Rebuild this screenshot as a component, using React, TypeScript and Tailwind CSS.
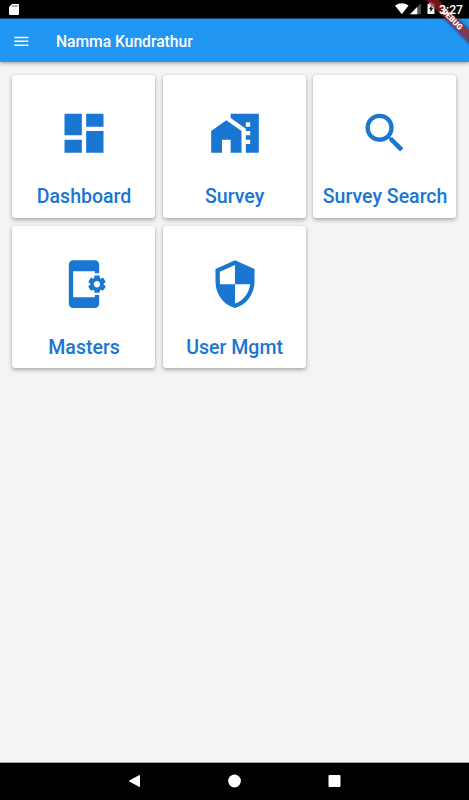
import type { IconType } from 'react-icons';
import { MdAppSettingsAlt, MdDashboard, MdHomeWork, MdMenu, MdSearch, MdSecurity } from 'react-icons/md';

interface MenuItem {
  label: string;
  icon: IconType;
}

const MENU: MenuItem[] = [
  { label: 'Dashboard', icon: MdDashboard },
  { label: 'Survey', icon: MdHomeWork },
  { label: 'Survey Search', icon: MdSearch },
  { label: 'Masters', icon: MdAppSettingsAlt },
  { label: 'User Mgmt', icon: MdSecurity },
];

export default function App() {
  return (
    <div className="relative flex h-[800px] w-[469px] flex-col overflow-hidden bg-[#f4f4f4] font-[Roboto,sans-serif]">
      <StatusBar />
      <header className="z-10 flex h-[43px] shrink-0 items-center bg-[#2196f3] pl-[12.4px] text-white shadow-[0_1px_4px_rgba(0,0,0,0.4)]">
        <MdMenu className="mt-px size-[18.7px]" />
        <h1 className="ml-[24.9px] mt-[2px] text-[15.64px] font-medium leading-5">Namma Kundrathur</h1>
      </header>
      <main className="grid flex-1 grid-cols-[repeat(3,143px)] content-start gap-x-[7.5px] gap-y-[8.3px] pl-[12.4px] pt-[13px]">
        {MENU.map((item) => (
          <MenuCard key={item.label} item={item} />
        ))}
      </main>
      <NavBar />
      <DebugBanner />
    </div>
  );
}

function MenuCard({ item }: { item: MenuItem }) {
  const Icon = item.icon;
  return (
    <button className="flex h-[142.5px] flex-col items-center rounded-[3px] bg-white pt-8 text-[#1976d2] shadow-[0_2px_4px_rgba(0,0,0,0.3),0_0_2px_rgba(0,0,0,0.1)]">
      <Icon className="ml-[0.6px] h-[52.4px] w-[52px] shrink-0" />
      <span className="ml-[0.4px] mt-[26px] whitespace-nowrap text-[19.55px] font-medium leading-6">{item.label}</span>
    </button>
  );
}

// ── System bars ──────────────────────────────────────────

function StatusBar() {
  return (
    <div className="flex h-[19px] shrink-0 items-center justify-between border-b border-[#104a7a] bg-black pl-[9px] pr-[6px] text-white">
      <svg className="h-[11px] w-[10px]" viewBox="0 0 10 11">
        <path fill="#fff" d="M3 0H9Q10 0 10 1V10Q10 11 9 11H1Q0 11 0 10V3Z" />
        <path stroke="#000" strokeWidth=".7" d="M4 1.3V3M6 1.3V3M8 1.3V3" />
      </svg>
      <div className="flex h-full items-center">
        <svg className="h-[18px] w-[43px]" viewBox="0 0 43 18">
          <path fill="#fff" d="M0 5.6Q6.8.8 13.6 5.6L6.8 14.2Z" />
          <path fill="#555" d="M25.8 3.5V14.3H15Z" />
          <path fill="#fff" d="M22.2 6.9V14.3H15Z" />
          <path fill="#fff" d="M32.5 3.7H34V2.6H37.2V3.7H39.5V14H32.5Z" />
          <path fill="#000" d="M36.8 5.2L33.9 9.3H35.7L35.2 12.5L38.2 8.3H36.3Z" />
        </svg>
        {/* the clock stays above the debug ribbon */}
        <span className="relative z-30 ml-[1px] mt-[1px] text-[12.2px] font-medium leading-[14px]">3:27</span>
      </div>
    </div>
  );
}

function NavBar() {
  return (
    <nav className="flex h-[38px] shrink-0 items-center justify-center border-t border-[#a3a3a3] bg-black">
      <svg className="mb-px h-[14px] w-[213px]" viewBox="0 0 213 14" fill="#fff">
        <path d="M11 1.2Q12 .7 12 1.7V12.3Q12 13.3 11 12.8L1.3 7.5Q.6 7 1.3 6.5Z" />
        <circle cx="106.5" cy="7" r="6.4" />
        <rect x="200.5" y="1" width="12" height="12" rx="1" />
      </svg>
    </nav>
  );
}

function DebugBanner() {
  return (
    <div className="absolute right-0 top-0 z-20 size-[50px] overflow-hidden">
      <div className="absolute left-[-7px] top-[15.3px] flex h-[9.4px] w-[80px] rotate-45 items-center justify-center bg-[#981c20]/75 text-[8px] font-black leading-none text-white shadow-[0_0_4px_rgba(0,0,0,0.5)]">
        DEBUG
      </div>
    </div>
  );
}
